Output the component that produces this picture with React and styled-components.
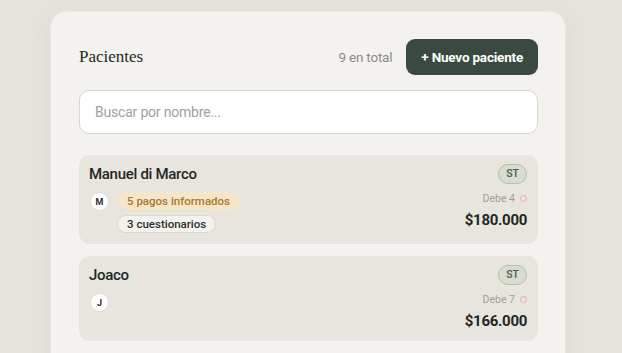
import styled, { createGlobalStyle } from "styled-components"

const GlobalStyle = createGlobalStyle`
    html, body {
        margin: 0;
        padding: 0;
        background: #e6e3dd;
        font-family: Roboto, "Liberation Sans", sans-serif;
        -webkit-font-smoothing: antialiased;
    }
    * { box-sizing: border-box; }
`

const patients = [
    { name: "Manuel di Marco", initial: "M", pagos: 5, cuestionarios: 3, debe: 4, amount: "$180.000" },
    { name: "Joaco", initial: "J", debe: 7, amount: "$166.000" },
]

const App = () => {
    return (
        <>
            <GlobalStyle />
            <StPage>
                <StCard>
                    <StHeader>
                        <StTitle>Pacientes</StTitle>
                        <StHeaderRight>
                            <StCount>9 en total</StCount>
                            <StNewButton>+ Nuevo paciente</StNewButton>
                        </StHeaderRight>
                    </StHeader>
                    <StSearch placeholder="Buscar por nombre..." />
                    <StList>
                        {patients.map((p) => (
                            <StRow key={p.name}>
                                <StRowLeft>
                                    <StName>{p.name}</StName>
                                    <StMeta>
                                        <StAvatar>{p.initial}</StAvatar>
                                        <StChips>
                                            {p.pagos && <StChip $tone="warn">{p.pagos} pagos informados</StChip>}
                                            {p.cuestionarios && <StChip>{p.cuestionarios} cuestionarios</StChip>}
                                        </StChips>
                                    </StMeta>
                                </StRowLeft>
                                <StRowRight>
                                    <StBadge>ST</StBadge>
                                    <StDebt>
                                        Debe {p.debe}
                                        <StDot />
                                    </StDebt>
                                    <StAmount>{p.amount}</StAmount>
                                </StRowRight>
                            </StRow>
                        ))}
                        <StRow $stub />
                    </StList>
                </StCard>
            </StPage>
        </>
    )
}

export default App

const StPage = styled.div`
    height: 353px;
    overflow: hidden;
    padding: 11px 56px 0 50px;
`
const StCard = styled.div`
    width: 516px;
    background: #f4f2ee;
    border: 1px solid #ebe7e0;
    border-radius: 16px;
    padding: 27px 27px 40px 28px;
    box-shadow: 0 4px 24px rgba(80, 70, 50, 0.06);
`
const StHeader = styled.div`
    display: flex;
    align-items: center;
    justify-content: space-between;
    height: 36px;
`
const StTitle = styled.h1`
    margin: 0;
    font-family: "Liberation Serif", "DejaVu Serif", serif;
    font-weight: 400;
    font-size: 17px;
    color: #222a26;
`
const StHeaderRight = styled.div`
    display: flex;
    align-items: center;
    gap: 14px;
`
const StCount = styled.span`
    font-size: 13.5px;
    color: #8d8a84;
    letter-spacing: -0.2px;
`
const StNewButton = styled.button`
    height: 36px;
    padding: 0 15px;
    border: none;
    border-radius: 9px;
    background: #3a4a3f;
    color: #fff;
    font-family: Roboto, "Liberation Sans", sans-serif;
    font-size: 13.5px;
    font-weight: 700;
    letter-spacing: -0.2px;
`
const StSearch = styled.input`
    display: block;
    width: 100%;
    height: 44px;
    margin-top: 15px;
    padding: 0 15px;
    border: 1px solid #dbd6ca;
    border-radius: 10px;
    background: #fff;
    font-family: Roboto, "Liberation Sans", sans-serif;
    font-size: 14px;
    letter-spacing: -0.2px;
    color: #333;
    outline: none;
    &::placeholder {
        color: #a3a09a;
    }
`
const StList = styled.div`
    display: flex;
    flex-direction: column;
    gap: 12px;
    margin-top: 21px;
`
const StRow = styled.div`
    display: flex;
    justify-content: space-between;
    min-height: ${(p) => (p.$stub ? "60px" : "auto")};
    padding: 9px 11px 11px 10px;
    background: #e8e5df;
    border-radius: 11px;
`
const StRowLeft = styled.div`
    display: flex;
    flex-direction: column;
`
const StName = styled.div`
    font-size: 15px;
    font-weight: 500;
    color: #232825;
    letter-spacing: -0.3px;
    line-height: 20px;
`
const StMeta = styled.div`
    display: flex;
    align-items: flex-start;
    gap: 8px;
    margin-top: 8px;
`
const StAvatar = styled.div`
    width: 19px;
    height: 19px;
    margin-left: 1px;
    border-radius: 50%;
    background: #fff;
    border: 1px solid #e1ddd5;
    display: flex;
    align-items: center;
    justify-content: center;
    font-size: 9px;
    font-weight: 700;
    color: #2a2f2b;
`
const StChips = styled.div`
    display: flex;
    flex-direction: column;
    align-items: flex-start;
    gap: 5px;
`
const StChip = styled.span`
    height: 18px;
    line-height: 16px;
    padding: 0 9px;
    border-radius: 9px;
    font-size: 11.5px;
    font-weight: 500;
    background: ${(p) => (p.$tone === "warn" ? "#f5e6cb" : "#f4f2ee")};
    border: 1px solid ${(p) => (p.$tone === "warn" ? "#f5e6cb" : "#dcd7cd")};
    color: ${(p) => (p.$tone === "warn" ? "#ad762c" : "#2c302d")};
`
const StRowRight = styled.div`
    display: flex;
    flex-direction: column;
    align-items: flex-end;
`
const StBadge = styled.span`
    height: 20px;
    padding: 0 7px;
    line-height: 18px;
    border-radius: 10px;
    border: 1px solid #b7bdae;
    background: #d9ddd1;
    color: #4b5a4b;
    font-size: 10.5px;
    font-weight: 500;
`
const StDebt = styled.div`
    display: flex;
    align-items: center;
    gap: 5px;
    margin-top: 8px;
    font-size: 10.5px;
    color: #a29f98;
`
const StDot = styled.span`
    width: 7px;
    height: 7px;
    border-radius: 50%;
    border: 1px solid #eba9a3;
`
const StAmount = styled.div`
    margin-top: 6px;
    font-size: 15px;
    font-weight: 700;
    color: #222724;
    letter-spacing: -0.3px;
`
